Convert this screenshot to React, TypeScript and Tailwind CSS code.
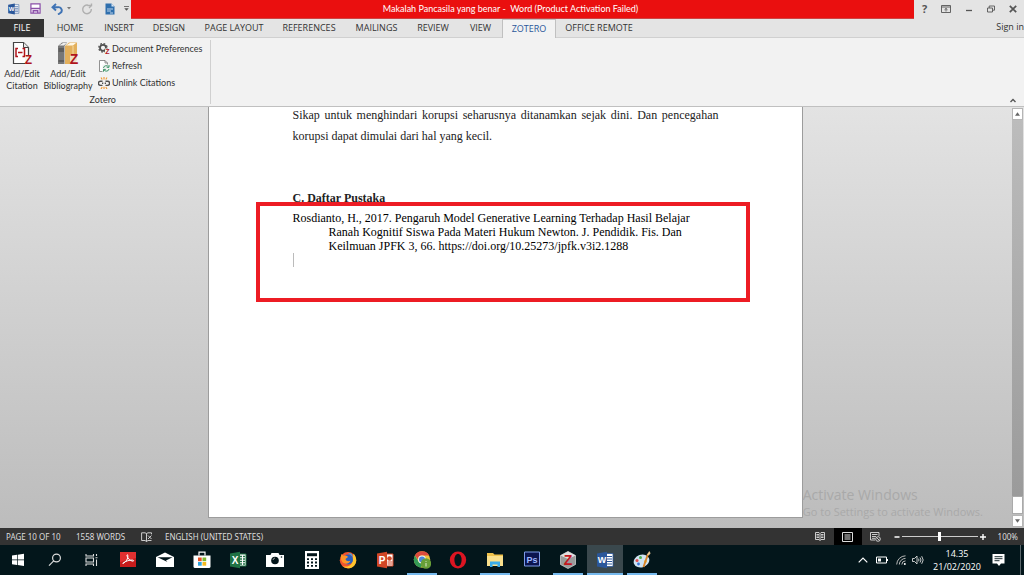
import type { ReactNode } from "react";
import clsx from "clsx";

const tabs = [
  { label: "FILE", width: "w-11" },
  { label: "HOME", width: "w-[52px]" },
  { label: "INSERT", width: "w-[46px]" },
  { label: "DESIGN", width: "w-[54px]" },
  { label: "PAGE LAYOUT", width: "w-[76px]" },
  { label: "REFERENCES", width: "w-[74px]" },
  { label: "MAILINGS", width: "w-[61px]" },
  { label: "REVIEW", width: "w-[52px]" },
  { label: "VIEW", width: "w-[43px]" },
  { label: "ZOTERO", width: "w-[54px]" },
  { label: "OFFICE REMOTE", width: "w-[86px]" },
];

const Letter = ({ x, y, size, fill = "#fff", children }: { x: number; y: number; size: number; fill?: string; children: string }) => (
  <text x={x} y={y} fontSize={size} fill={fill} fontWeight="bold" textAnchor="middle" className="font-['Liberation_Sans',sans-serif]">
    {children}
  </text>
);

const WordIcon = ({ className }: { className?: string }) => (
  <svg viewBox="0 0 18 18" className={className}>
    <path d="M9 2.5h8v13H9z" fill="#fff" stroke="#2b579a" strokeWidth="0.8" />
    <path d="M11 5.5h5M11 8h5M11 10.5h5M11 13h5" stroke="#2b579a" strokeWidth="1" />
    <path d="M1 2.5L11 .8v16.4L1 15.5z" fill="#2b579a" />
    <Letter x={6} y={12} size={9}>W</Letter>
  </svg>
);

const CitationIcon = () => (
  <svg viewBox="0 0 22 26" className="h-[26px] w-[22px]">
    <path d="M2.5 1.5h10l5 5v16h-15z" fill="#fff" stroke="#444" strokeWidth="1.2" />
    <path d="M12.5 1.5v5h5" fill="#e8e8e8" stroke="#444" />
    <path d="M7 7.5H5v8h2M11.5 7.5h2v8h-2M7 11.5h4.5" fill="none" stroke="#b0141b" strokeWidth="1.5" />
    <path d="M14 14h8v11h-8z" fill="#f2f2f2" />
    <Letter x={17.5} y={23.4} size={12} fill="#b0141b">Z</Letter>
  </svg>
);

const BooksIcon = () => (
  <svg viewBox="0 0 22 26" className="h-[26px] w-[22px]">
    <path d="M1 5l4-3.5h5L7.5 5v18H1z" fill="#777" />
    <path d="M2 4.5l4-2.5h3.5L7 4.5z" fill="#eee" />
    <path d="M1.5 8H7M1.5 10H7M1.5 20H7" stroke="#444" />
    <path d="M8 5l4-3.5h8V19l-3 4H8z" fill="#e3b05c" />
    <path d="M9 4.5l4-2.5h6l-3 2.5z" fill="#fff7e5" />
    <path d="M16 5v8" stroke="#f7d9a0" />
    <path d="M13 13h9v12h-9z" fill="#f2f2f2" opacity="0.7" />
    <Letter x={17} y={23} size={14} fill="#b0141b">Z</Letter>
  </svg>
);

const GearIcon = () => (
  <svg viewBox="0 0 12 12" className="size-3">
    <circle cx="5" cy="4.8" r="3" fill="none" stroke="#505050" strokeWidth="1.8" />
    <circle cx="5" cy="4.8" r="4.2" fill="none" stroke="#505050" strokeWidth="1.3" strokeDasharray="1.7 1.6" />
    <path d="M7 5.5h5V12H7z" fill="#f2f2f2" />
    <Letter x={9.4} y={10.5} size={7} fill="#b0141b">Z</Letter>
  </svg>
);

const RefreshIcon = () => (
  <svg viewBox="0 0 12 12" className="size-3">
    <path d="M1.5.5H7L9.500 3v8.500h-8z" fill="#fff" stroke="#777" strokeWidth="0.8" />
    <path d="M7 .5V3h2.500" fill="none" stroke="#777" strokeWidth="0.8" />
    <path d="M4.500 4.500H12V12H4.500z" fill="#f2f2f2" />
    <path d="M5.500 8a2.700 2.700 0 0 1 5-1M11 5v2.300H8.700M11 9a2.700 2.700 0 0 1-5 .8M5.500 11.700V9.400h2.300" fill="none" stroke="#3d9568" />
  </svg>
);

const UnlinkIcon = () => (
  <svg viewBox="0 0 12 12" className="size-3">
    <path d="M4.500 4.200H2.500a2 2 0 0 0 0 4.200h2M7.500 4.200h2a2 2 0 0 1 0 4.200h-2M4 6.300h1.300M6.700 6.300H8" fill="none" stroke="#505050" strokeWidth="1.4" />
    <path d="M3 .5l1.200 2M6 0V2.500M9 .5l-1.200 2M3 12l1.200-2M6 12V9.800M9 12l-1.200-2" stroke="#f0962c" strokeWidth="1.1" />
  </svg>
);

const QuickAccess = () => (
  <div className="flex h-[17px] w-[131px] shrink-0 items-center pl-[7px]">
    <WordIcon className="h-3 w-[13px]" />
    <button aria-label="Save" className="ml-[10px]">
      <svg viewBox="0 0 12 12" className="h-[11px] w-[11px]">
        <path d="M1 1h10v10H1z" fill="#fff" stroke="#8a4fa8" strokeWidth="1.3" />
        <path d="M1 6h10M3.500 11V8.500h5V11" fill="none" stroke="#8a4fa8" strokeWidth="1.5" />
      </svg>
    </button>
    <button aria-label="Undo" className="ml-[10px] flex items-center gap-1">
      <svg viewBox="0 0 12 12" className="h-3 w-3">
        <path d="M5 1L1.500 4.200 5 7.500M1.500 4.200H7a3.200 3.200 0 0 1 2 6L7 11.500" fill="none" stroke="#3f73b5" strokeWidth="1.9" />
      </svg>
      <svg viewBox="0 0 4 3" className="h-[3px] w-1">
        <path d="M0 0h4L2 2.500z" fill="#777" />
      </svg>
    </button>
    <button aria-label="Repeat" className="ml-[10px]">
      <svg viewBox="0 0 12 12" className="h-3 w-3">
        <path d="M7 2.200A4.300 4.300 0 1 0 10.300 6M6.500 2.500h4V.5M10.500 2.500L8 5" fill="none" stroke="#b0b0b0" strokeWidth="1.4" />
      </svg>
    </button>
    <button aria-label="New document" className="ml-3">
      <svg viewBox="0 0 10 12" className="h-3 w-[10px]">
        <path d="M.5.5h6l3 3v8h-9z" fill="#2f6fad" />
        <path d="M6.500.5v3h3" fill="#dbe8f5" />
        <path d="M2 6h6M2 8h4M5 10h3" stroke="#cfe0f2" strokeWidth="0.9" />
      </svg>
    </button>
    <button aria-label="Customize toolbar" className="ml-[9px]">
      <svg viewBox="0 0 5 5" className="size-[5px]">
        <path d="M0 .5h5" stroke="#555" strokeWidth="0.8" />
        <path d="M.3 2.300h4.400L2.500 4.700z" fill="#555" />
      </svg>
    </button>
  </div>
);

const WindowControls = () => (
  <div className="flex h-[17px] w-[110px] shrink-0 items-center justify-between pr-[7px] pl-2 text-[#555]">
    <button aria-label="Help" className="font-['Open_Sans',sans-serif] text-[11px] leading-4 font-bold">?</button>
    <button aria-label="Ribbon display options">
      <svg viewBox="0 0 10 8" className="h-2 w-[10px]" fill="none" stroke="currentColor" strokeWidth="0.9">
        <path d="M.5.5h9v7h-9zM.5 2h9M5 6.500v-3M3.500 4.800L5 3.400l1.500 1.400" />
      </svg>
    </button>
    <button aria-label="Minimize">
      <svg viewBox="0 0 8 8" className="size-2"><path d="M1 5.500h6" stroke="currentColor" strokeWidth="1.3" /></svg>
    </button>
    <button aria-label="Restore">
      <svg viewBox="0 0 8 8" className="size-2" fill="none" stroke="currentColor" strokeWidth="0.9">
        <path d="M.5 3h5v4h-5zM2.200 3V1h5.300v4.200H5.500" />
      </svg>
    </button>
    <button aria-label="Close">
      <svg viewBox="0 0 8 8" className="size-2"><path d="M.8.8l6.400 6.400M7.200.8L.8 7.200" stroke="currentColor" strokeWidth="1.7" /></svg>
    </button>
  </div>
);

const Ribbon = () => (
  <div className="flex h-[69px] items-stretch justify-between border-b border-[#c0c0c0] bg-[#f2f2f2]">
    <div className="my-[2px] flex flex-col border-r border-[#d0d0d0] pr-2 pl-[3px]">
      <div className="flex flex-1">
        <button className="flex w-[38px] flex-col items-center gap-px pt-px text-[9px] leading-3">
          <CitationIcon />
          <span>Add/Edit Citation</span>
        </button>
        <button className="flex w-[54px] flex-col items-center gap-px pt-px text-[9px] leading-3">
          <BooksIcon />
          <span>Add/Edit Bibliography</span>
        </button>
        <div className="ml-[3px] flex flex-col text-[9px] leading-[17px]">
          <button className="flex items-center gap-[2px] whitespace-nowrap"><GearIcon />Document Preferences</button>
          <button className="flex items-center gap-[2px]"><RefreshIcon />Refresh</button>
          <button className="flex items-center gap-[2px]"><UnlinkIcon />Unlink Citations</button>
        </div>
      </div>
      <div className="text-center text-[9px] leading-[9px]">Zotero</div>
    </div>
    <button aria-label="Collapse ribbon" className="mr-2 mb-[3px] self-end">
      <svg viewBox="0 0 6 5" className="h-[5px] w-[6px]"><path d="M.5 4L3 1.500 5.500 4" fill="none" stroke="#555" strokeWidth="1.4" /></svg>
    </button>
  </div>
);

const ScrollBar = () => (
  <div className="flex w-[14px] shrink-0 flex-col pt-px pr-px pl-[2px]">
    <button aria-label="Scroll up" className="flex h-3 items-center justify-center border border-[#b5b5b5] bg-white">
      <svg viewBox="0 0 6 4" className="h-1 w-[5px]"><path d="M0 4h6L3 0z" fill="#666" /></svg>
    </button>
    <div className="flex flex-1 flex-col justify-end bg-linear-to-b from-[#bcbcbc] to-[#999]">
      <div className="h-[18px] border border-[#aaa] bg-white" />
    </div>
    <button aria-label="Scroll down" className="mt-px mb-px flex h-3 items-center justify-center border border-[#b5b5b5] bg-white">
      <svg viewBox="0 0 6 4" className="h-1 w-[5px]"><path d="M0 0h6L3 4z" fill="#666" /></svg>
    </button>
  </div>
);

const Document = () => (
  <main className="relative flex min-h-0 flex-1 bg-linear-to-b from-[#e3e3e3] to-[#bcbcbc]">
    <div className="flex flex-1 justify-center pb-[10px]">
      <article className="relative w-[595px] border-x border-b border-[#9c9c9c] bg-white pr-[83px] pl-[84px] font-['Liberation_Serif',serif] text-[12px] text-[#222]">
        <p className="-mt-[2px] text-justify leading-[21px]">
          Sikap untuk menghindari korupsi seharusnya ditanamkan sejak dini. Dan pencegahan korupsi dapat dimulai dari hal yang kecil.
        </p>
        <h2 className="mt-[41px] leading-[21px] font-bold">C. Daftar Pustaka</h2>
        <p className="mt-[2px] pl-9 -indent-9 leading-[14px] text-black">
          Rosdianto, H., 2017. Pengaruh Model Generative Learning Terhadap Hasil Belajar
          <span className="block indent-0">Ranah Kognitif Siswa Pada Materi Hukum Newton. J. Pendidik. Fis. Dan</span>
          <span className="block indent-0">Keilmuan JPFK 3, 66. https://doi.org/10.25273/jpfk.v3i2.1288</span>
        </p>
        <div className="h-[14px] w-px bg-[#bbb]" />
        <div className="absolute top-[95px] left-[47px] h-[100px] w-[494px] border-4 border-[#ed1c24]" />
      </article>
    </div>
    <ScrollBar />
    <div className="absolute right-[41px] bottom-[8px] font-['Open_Sans',sans-serif] text-[#a9a9a9]">
      <div className="text-[14px] leading-[18px]">Activate Windows</div>
      <div className="text-[11px] leading-4">Go to Settings to activate Windows.</div>
    </div>
  </main>
);

const StatusBar = () => (
  <div className="flex h-[17px] items-center justify-between bg-[#333] font-['Noto_Sans',sans-serif] text-[8px] text-[#dcdcdc]">
    <div className="flex items-center pl-[6px]">
      <span className="w-[70px]">PAGE 10 OF 10</span>
      <span className="w-[65px]">1558 WORDS</span>
      <button aria-label="Proofing" className="w-6">
        <svg viewBox="0 0 11 10" className="h-[10px] w-[11px]" fill="none" stroke="currentColor" strokeWidth="0.9">
          <path d="M5.500 1.500L4 .8H.6v7.700H4l1.500 1V1.500L7 .8h3.500v1.500M5.500 9.500L7 8.500h3.500M7 3.500l3.500 3.500M10.500 3.500L7 7" />
        </svg>
      </button>
      <span>ENGLISH (UNITED STATES)</span>
    </div>
    <div className="flex h-full items-center">
      <button aria-label="Read mode" className="flex h-full w-7 items-center justify-center">
        <svg viewBox="0 0 10 9" className="h-[9px] w-[10px]" fill="none" stroke="currentColor" strokeWidth="0.9">
          <path d="M.5.5H4l1 1 1-1h3.500v7H6l-1 1-1-1H.5zM5 1.500v7M1.500 2.500h2.500M1.500 4h2.500M1.500 5.500h2.500M6 2.500h2.500M6 4h2.500M6 5.500h2.500" />
        </svg>
      </button>
      <button aria-label="Print layout" className="flex h-full w-7 items-center justify-center bg-black">
        <svg viewBox="0 0 11 10" className="h-[10px] w-[11px]" fill="none" stroke="currentColor">
          <path d="M.5.5h10v9H.5zM2.500 3h6M2.500 5h6M2.500 7h6" />
        </svg>
      </button>
      <button aria-label="Web layout" className="flex h-full w-7 items-center justify-center">
        <svg viewBox="0 0 11 10" className="h-[10px] w-[11px]" fill="none" stroke="currentColor" strokeWidth="0.9">
          <path d="M9 4V.5H.5V8H5M2 2.500h5.500M2 4.500h4M2 6.300h3" />
          <circle cx="8" cy="7" r="2.3" />
          <path d="M6.500 5.500l3 3" />
        </svg>
      </button>
      <button aria-label="Zoom out" className="ml-1 w-2">
        <svg viewBox="0 0 6 6" className="size-[6px]"><path d="M.5 3h5" stroke="#fff" strokeWidth="1.5" /></svg>
      </button>
      <input
        type="range"
        aria-label="Zoom"
        defaultValue={50}
        className="h-[9px] w-[76px] appearance-none bg-[linear-gradient(#ccc,#ccc)] bg-[length:100%_1px] bg-center bg-no-repeat [&::-webkit-slider-thumb]:h-[9px] [&::-webkit-slider-thumb]:w-[3px] [&::-webkit-slider-thumb]:appearance-none [&::-webkit-slider-thumb]:bg-white"
      />
      <button aria-label="Zoom in" className="ml-[2px] w-[18px]">
        <svg viewBox="0 0 6 6" className="size-[6px]"><path d="M0 3h6M3 0v6" stroke="#fff" strokeWidth="1.4" /></svg>
      </button>
      <span className="pr-[6px]">100%</span>
    </div>
  </div>
);

type App = { name: string; icon: ReactNode; open?: boolean; active?: boolean };

const apps: App[] = [
  {
    name: "Start",
    icon: <path d="M3 4.500l5-.7v4.700H3zM8.700 3.700l6.300-.9v5.700H8.700zM3 9.200h5v4.700l-5-.7zM8.700 9.200H15v5.700l-6.300-.9z" fill="#fff" />,
  },
  {
    name: "Search",
    icon: (
      <g fill="none" stroke="#ddd" strokeWidth="1.2">
        <circle cx="10.5" cy="7" r="3.9" />
        <path d="M7.700 9.900L3 14.700" />
      </g>
    ),
  },
  {
    name: "Task view",
    icon: <path d="M3 3v2h7.500V3M3 15v-2h7.500v2M3 7h7.500v4H3zM13.500 3v2M13.500 8.500V15M12.500 6.800h2" fill="none" stroke="#ddd" strokeWidth="1.1" />,
  },
  {
    name: "Adobe Reader",
    icon: (
      <>
        <path d="M1 1h16v15H1z" fill="#c81c1c" />
        <path d="M1 1h16v6L1 11z" fill="#e13030" />
        <path d="M4 12.500c3-1.500 5.300-5 4.800-8 0-1.300-1.200-1-.8.300.7 2.700 3 5.200 6 5.400 1 0 .8-1.200-.5-1.200-3.200 0-6.500 1.100-9 2.700-.8.600-1 .800-.5.800z" fill="none" stroke="#fff" strokeWidth="1" />
      </>
    ),
  },
  {
    name: "Mail",
    icon: (
      <>
        <path d="M0 6l9-4.500L18 6v10H0z" fill="#fff" />
        <path d="M1.500 6.200h15L10 9.500l1.500 1.500z" fill="#03161b" />
      </>
    ),
  },
  {
    name: "Store",
    icon: (
      <>
        <path d="M.5 4.500h17V16a1.500 1.500 0 0 1-1.500 1H2a1.500 1.500 0 0 1-1.500-1z" fill="#fff" />
        <path d="M6 4.500V1.200h6v3.300" fill="none" stroke="#fff" strokeWidth="1.2" />
        <path d="M5 6.500h3.700v3.700H5z" fill="#e65126" />
        <path d="M9.500 6.500h3.700v3.700H9.500z" fill="#7db72f" />
        <path d="M5 11h3.700v3.700H5z" fill="#2fa3dd" />
        <path d="M9.500 11h3.700v3.700H9.500z" fill="#f5b91d" />
      </>
    ),
  },
  {
    name: "Excel",
    icon: (
      <>
        <path d="M9 3h8v12H9z" fill="#fff" stroke="#207245" />
        <path d="M11 5.500h5M11 8h5M11 10.500h5M11 13h5" stroke="#207245" strokeWidth="1.3" />
        <path d="M13.500 4v10" stroke="#fff" />
        <path d="M1 2.500l10-1.700v16.400L1 15.500z" fill="#207245" />
        <Letter x={6} y={12.5} size={10}>X</Letter>
      </>
    ),
  },
  {
    name: "Camera",
    icon: (
      <>
        <path d="M0 4h4.500l1-2h7l1 2H18v12H0z" fill="#fff" />
        <circle cx="9" cy="9.5" r="3.8" fill="#03161b" />
        <path d="M7 9a2.300 2.300 0 0 1 2-2" fill="none" stroke="#999" />
        <circle cx="15.5" cy="6" r=".8" fill="#03161b" />
      </>
    ),
  },
  {
    name: "Calculator",
    icon: (
      <>
        <path d="M2 0h14v18H2z" fill="#fff" />
        <path d="M4 2.200h10v3H4z" fill="#03161b" />
        <path d="M4 8.200h10M4 11.500h10M4 14.800h10" stroke="#03161b" strokeWidth="1.8" strokeDasharray="2 2" />
      </>
    ),
  },
  {
    name: "Firefox",
    icon: (
      <>
        <circle cx="9" cy="9.3" r="8.2" fill="#f4542c" />
        <path d="M14.500 2.500c3.800 4 3.700 10-.5 13.200-3 2.300-7.500 2-10.500-.7 6 2 10.500-1.500 10-6.500z" fill="#ffc52d" />
        <circle cx="9" cy="8.5" r="5" fill="#265fc2" />
        <path d="M2.500 3l2 1.800C7 4 8.500 5 9 6L6.500 8c.5 2.500 3.500 2.500 5 1.700-1.500 3.500-6.500 4-8.500.8C1.500 8 1.500 5.500 2.500 3z" fill="#ff9528" />
        <path d="M9 2c3-.6 5 1.500 5 4.500-1.500-2.500-3-3-5-4.500z" fill="#3aa4e8" />
      </>
    ),
  },
  {
    name: "PowerPoint",
    icon: (
      <>
        <path d="M9 3h8v12H9z" fill="#fff" stroke="#d24726" />
        <path d="M11.500 11h5M11.500 13h5" stroke="#d24726" />
        <circle cx="13.5" cy="7.5" r="2.3" fill="#d24726" />
        <path d="M1 2.500L11 .8v16.400L1 15.500z" fill="#d24726" />
        <Letter x={6} y={12.5} size={10}>P</Letter>
      </>
    ),
  },
  {
    name: "Chrome",
    open: true,
    icon: (
      <>
        <circle cx="9" cy="8.5" r="8.2" fill="#e8c43c" />
        <path d="M9 .3a8.200 8.200 0 0 1 7.200 4.200H9a4 4 0 0 0-4 4L1.900 4.400A8.200 8.200 0 0 1 9 .3z" fill="#dc4b3e" />
        <path d="M1.900 4.400L5.500 10.500A4 4 0 0 0 10 12.400l-2 4.200A8.200 8.200 0 0 1 1.900 4.400z" fill="#349a57" />
        <circle cx="9" cy="8.5" r="3.9" fill="#f4f4f4" />
        <circle cx="9" cy="8.5" r="3" fill="#4a86d8" />
        <circle cx="13" cy="12.5" r="5.2" fill="#689f38" />
        <path d="M13 10v.8M13 12v3.500" stroke="#dcebcc" />
      </>
    ),
  },
  {
    name: "Opera",
    icon: (
      <>
        <ellipse cx="9" cy="9" rx="8.2" ry="8.5" fill="#dc1522" />
        <ellipse cx="9" cy="9" rx="3.6" ry="6.2" fill="#03161b" />
      </>
    ),
  },
  {
    name: "File Explorer",
    open: true,
    icon: (
      <>
        <path d="M1 2h6l1.500 1.500H17V15H1z" fill="#f0c24b" />
        <path d="M1 5h16v10H1z" fill="#fbe08c" />
        <path d="M4 16v-5.500h10V16h-2.500v-2.500h-5V16z" fill="#3badea" />
      </>
    ),
  },
  {
    name: "Photoshop",
    icon: (
      <>
        <path d="M1.500 1h15v14h-15z" fill="#0b1550" stroke="#7d9be8" />
        <Letter x={9} y={11.5} size={9} fill="#9fb9ff">Ps</Letter>
      </>
    ),
  },
  {
    name: "Zotero",
    open: true,
    icon: (
      <>
        <path d="M9 .5l7.500 4v9L9 17.500l-7.500-4v-9z" fill="#9a9a9a" stroke="#ddd" strokeWidth="0.7" />
        <path d="M9 .5l7.500 4L9 8 1.500 4.500z" fill="#e0e0e0" />
        <Letter x={9} y={14} size={14} fill="#c3161d">Z</Letter>
      </>
    ),
  },
  { name: "Word", open: true, active: true, icon: null },
  {
    name: "Paint",
    open: true,
    icon: (
      <>
        <ellipse cx="8.5" cy="10" rx="8" ry="6.3" fill="#cfe3f3" transform="rotate(-20 8.5 10)" />
        <circle cx="4" cy="9.5" r="1.5" fill="#e04d4d" />
        <circle cx="7.5" cy="6.5" r="1.5" fill="#4caf50" />
        <circle cx="5.5" cy="13" r="1.4" fill="#3d78d8" />
        <circle cx="12.5" cy="10.5" r="1.4" fill="#eec63b" />
        <path d="M15 3L10.500 16" stroke="#d98228" strokeWidth="1.9" />
        <path d="M14 3.500L16.300 0l1.300 2.300-1.700 2.200z" fill="#e8c795" />
      </>
    ),
  },
];

const Taskbar = () => (
  <footer className="flex h-[30px] justify-between bg-[#03161b] text-white">
    <nav className="grid w-[660px] grid-cols-[repeat(18,minmax(0,1fr))]">
      {apps.map((app) => (
        <button
          key={app.name}
          aria-label={app.name}
          className={clsx("flex flex-col items-center justify-between", app.active && "bg-[#3a484d]")}
        >
          {app.name === "Word" ? (
            <WordIcon className="mt-[6px] h-[18px] w-[18px]" />
          ) : (
            <svg viewBox="0 0 18 18" className="mt-[6px] size-[18px]">{app.icon}</svg>
          )}
          {app.open && <span className={clsx("h-[2px] bg-[#76b9ed]", app.active ? "w-full" : "w-[30px]")} />}
        </button>
      ))}
    </nav>
    <div className="flex items-center">
      <button aria-label="Show hidden icons" className="w-[18px]">
        <svg viewBox="0 0 10 6" className="h-[6px] w-[10px]"><path d="M.7 5.300L5 1l4.300 4.300" fill="none" stroke="#fff" strokeWidth="1.2" /></svg>
      </button>
      <button aria-label="Battery" className="w-5">
        <svg viewBox="0 0 12 8" className="h-2 w-3" fill="none" stroke="#fff"><path d="M.5 1h10v6H.5zM11.500 3v2" /><path d="M2 2.500h3v3H2z" fill="#fff" stroke="none" /></svg>
      </button>
      <button aria-label="Wi-Fi" className="w-4">
        <svg viewBox="0 0 10 10" className="size-[10px]" fill="none" stroke="#bbb"><path d="M.7 9.500A9 9 0 0 1 9.500.8M3.300 9.500A6.300 6.300 0 0 1 9.500 3.400M5.800 9.500A3.800 3.800 0 0 1 9.500 5.900" /><circle cx="8.8" cy="9" r="1" fill="#fff" stroke="none" /></svg>
      </button>
      <button aria-label="Volume" className="w-[18px]">
        <svg viewBox="0 0 12 10" className="h-[10px] w-3" fill="none" stroke="#ddd" strokeWidth="0.9"><path d="M.5 3.500h2L5 1v8L2.500 6.500h-2zM6.500 3.700q1 1.300 0 2.600M8 2.500q2 2.500 0 5M9.700 1.200q3 3.800 0 7.600" /></svg>
      </button>
      <div className="w-[54px] text-center font-['Open_Sans',sans-serif] text-[9px] leading-[13px]">
        14.35
        <br />
        21/02/2020
      </div>
      <button aria-label="Notifications" className="w-7">
        <svg viewBox="0 0 12 12" className="mx-auto h-3 w-[13px]">
          <path d="M0 0h12v9.500H8.500L6.500 12l-2-2.500H0z" fill="#fff" />
          <path d="M2 2.700h8M2 4.700h8M2 6.700h5" stroke="#03161b" strokeWidth="0.9" />
        </svg>
      </button>
      <div className="mr-[3px] ml-2 h-full w-px bg-[#5b686c]" />
    </div>
  </footer>
);

export default function WordWindow() {
  return (
    <div className="flex h-screen flex-col overflow-hidden bg-[#e4e4e4] font-['Lato','Open_Sans',sans-serif] text-[#333]">
      <header className="flex h-[19px] items-start">
        <QuickAccess />
        <h1 className="h-full flex-1 border-b border-[#c44] bg-[#ea0f0f] pr-6 text-center text-[9px] leading-[18px] whitespace-pre text-white">
          Makalah Pancasila yang benar -  Word (Product Activation Failed)
        </h1>
        <WindowControls />
      </header>
      <div className="flex h-[19px] justify-between font-['Open_Sans',sans-serif] text-[9px]">
        <nav className="flex flex-1 border-b border-[#d0d0d0]">
          {tabs.map((tab) => (
            <button
              key={tab.label}
              className={clsx(
                "whitespace-nowrap",
                tab.width,
                tab.label === "FILE" && "bg-[#333] text-white",
                tab.label === "ZOTERO" && "-mb-px border-x border-t border-[#c0c0c0] bg-[#f2f2f2] text-[#2b579a]",
              )}
            >
              {tab.label}
            </button>
          ))}
        </nav>
        <a href="#signin" className="border-b border-[#d0d0d0] leading-[15px]">Sign in</a>
      </div>
      <Ribbon />
      <Document />
      <StatusBar />
      <Taskbar />
    </div>
  );
}
